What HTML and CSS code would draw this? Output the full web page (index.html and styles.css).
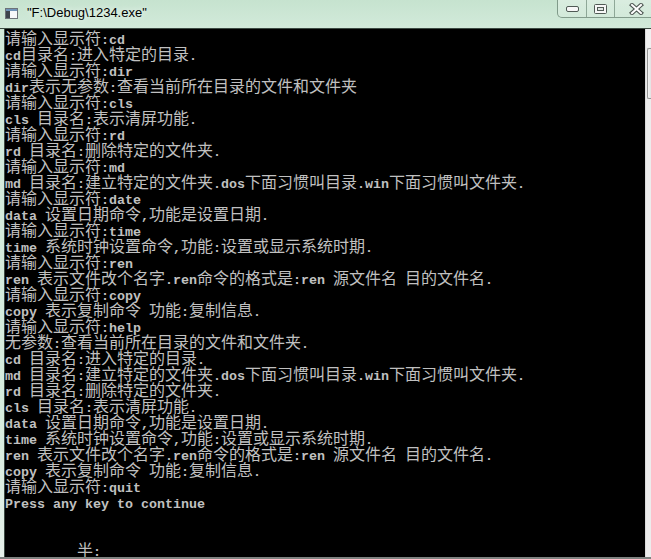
FILE: index.html
```html
<!DOCTYPE html>
<html>
<head>
<meta charset="utf-8">
<title>1234.exe</title>
<link rel="stylesheet" href="styles.css">
</head>
<body>
<div class="window">
  <div class="titlebar">
    <svg class="appicon" width="13" height="11" viewBox="0 0 13 11">
      <rect x="0.5" y="0.5" width="12" height="10" fill="#e8eef4" stroke="#6d7379"/>
      <rect x="1" y="1" width="11" height="2" fill="#6f93b8"/>
      <rect x="1" y="3" width="4" height="7" fill="#3d444c"/>
      <rect x="5" y="3" width="7" height="7" fill="#f6f8fa"/>
    </svg>
    <span class="title">"F:\Debug\1234.exe"</span>
    <div class="caption">
      <div class="cbtn">
        <svg width="13" height="6" viewBox="0 0 13 6"><rect x="0.5" y="0.5" width="12" height="5" rx="1.5" fill="#f7f7f7" stroke="#505a55"/></svg>
      </div>
      <div class="cbtn">
        <svg width="13" height="10" viewBox="0 0 13 10"><rect x="0.5" y="0.5" width="12" height="9" rx="1" fill="#f7f7f7" stroke="#505a55"/><rect x="3.5" y="3.5" width="6" height="3" fill="#dfe6e2" stroke="#505a55"/></svg>
      </div>
      <div class="cbtn close">
        <svg width="15" height="12" viewBox="0 0 15 12"><path d="M3 2 L12 10 M12 2 L3 10" stroke="#4d5752" stroke-width="4.2" stroke-linecap="square"/><path d="M3 2 L12 10 M12 2 L3 10" stroke="#ffffff" stroke-width="2" stroke-linecap="square"/></svg>
      </div>
    </div>
  </div>
  <div class="client">
    <div class="lframe"></div>
    <div class="console">
      <div class="l">请输入显示符<span class="a">:cd</span></div>
      <div class="l"><span class="a">cd</span>目录名<span class="a">:</span>进入特定的目录<span class="a">.</span></div>
      <div class="l">请输入显示符<span class="a">:dir</span></div>
      <div class="l"><span class="a">dir</span>表示无参数<span class="a">:</span>查看当前所在目录的文件和文件夹</div>
      <div class="l">请输入显示符<span class="a">:cls</span></div>
      <div class="l"><span class="a">cls </span>目录名<span class="a">:</span>表示清屏功能<span class="a">.</span></div>
      <div class="l">请输入显示符<span class="a">:rd</span></div>
      <div class="l"><span class="a">rd </span>目录名<span class="a">:</span>删除特定的文件夹<span class="a">.</span></div>
      <div class="l">请输入显示符<span class="a">:md</span></div>
      <div class="l"><span class="a">md </span>目录名<span class="a">:</span>建立特定的文件夹<span class="a">.dos</span>下面习惯叫目录<span class="a">.win</span>下面习惯叫文件夹<span class="a">.</span></div>
      <div class="l">请输入显示符<span class="a">:date</span></div>
      <div class="l"><span class="a">data </span>设置日期命令<span class="a">,</span>功能是设置日期<span class="a">.</span></div>
      <div class="l">请输入显示符<span class="a">:time</span></div>
      <div class="l"><span class="a">time </span>系统时钟设置命令<span class="a">,</span>功能<span class="a">:</span>设置或显示系统时期<span class="a">.</span></div>
      <div class="l">请输入显示符<span class="a">:ren</span></div>
      <div class="l"><span class="a">ren </span>表示文件改个名字<span class="a">.ren</span>命令的格式是<span class="a">:ren </span>源文件名<span class="a"> </span>目的文件名<span class="a">.</span></div>
      <div class="l">请输入显示符<span class="a">:copy</span></div>
      <div class="l"><span class="a">copy </span>表示复制命令<span class="a"> </span>功能<span class="a">:</span>复制信息<span class="a">.</span></div>
      <div class="l">请输入显示符<span class="a">:help</span></div>
      <div class="l">无参数<span class="a">:</span>查看当前所在目录的文件和文件夹<span class="a">.</span></div>
      <div class="l"><span class="a">cd </span>目录名<span class="a">:</span>进入特定的目录<span class="a">.</span></div>
      <div class="l"><span class="a">md </span>目录名<span class="a">:</span>建立特定的文件夹<span class="a">.dos</span>下面习惯叫目录<span class="a">.win</span>下面习惯叫文件夹<span class="a">.</span></div>
      <div class="l"><span class="a">rd </span>目录名<span class="a">:</span>删除特定的文件夹<span class="a">.</span></div>
      <div class="l"><span class="a">cls </span>目录名<span class="a">:</span>表示清屏功能<span class="a">.</span></div>
      <div class="l"><span class="a">data </span>设置日期命令<span class="a">,</span>功能是设置日期<span class="a">.</span></div>
      <div class="l"><span class="a">time </span>系统时钟设置命令<span class="a">,</span>功能<span class="a">:</span>设置或显示系统时期<span class="a">.</span></div>
      <div class="l"><span class="a">ren </span>表示文件改个名字<span class="a">.ren</span>命令的格式是<span class="a">:ren </span>源文件名<span class="a"> </span>目的文件名<span class="a">.</span></div>
      <div class="l"><span class="a">copy </span>表示复制命令<span class="a"> </span>功能<span class="a">:</span>复制信息<span class="a">.</span></div>
      <div class="l">请输入显示符<span class="a">:quit</span></div>
      <div class="l"><span class="a">Press any key to continue</span></div>
      <div class="l"></div>
      <div class="l"></div>
      <div class="l"><span class="a">         </span>半<span class="a">:</span></div>
    </div>
    <div class="scrollbar">
      <div class="sb-up"></div>
      <div class="thumb"><div class="grip"></div></div>
    </div>
  </div>
  <div class="bottom"></div>
</div>
</body>
</html>
```

FILE: styles.css
```css
* {
  box-sizing: border-box;
  margin: 0;
  padding: 0;
}

html, body {
  width: 651px;
  height: 559px;
  overflow: hidden;
}

body {
  background: #d3ebdb;
  font-family: "Liberation Sans", Arial, sans-serif;
}

.window {
  width: 651px;
  height: 559px;
  display: flex;
  flex-direction: column;
  overflow: hidden;
  background: linear-gradient(#c6e3cf 0px, #d2eada 28px, #d6ecde 420px, #e6f0ea 559px);
}

.titlebar {
  height: 28px;
  flex-shrink: 0;
  display: flex;
  align-items: flex-start;
}

.appicon {
  flex-shrink: 0;
  margin: 8px 0 0 5px;
}

.title {
  margin: 5px 0 0 9px;
  font-size: 13px;
  line-height: 16px;
  color: #000;
  text-shadow: 0 0 6px rgba(255, 255, 255, 0.9);
  white-space: nowrap;
}

.caption {
  margin-left: auto;
  margin-right: -8px;
  flex-shrink: 0;
  display: flex;
  height: 18px;
  border: 1px solid rgba(70, 100, 82, 0.6);
  border-top: none;
  border-radius: 0 0 0 5px;
  background: linear-gradient(rgba(255, 255, 255, 0.35), rgba(255, 255, 255, 0.12));
}

.cbtn {
  width: 28px;
  height: 17px;
  display: flex;
  align-items: center;
  justify-content: center;
  border-left: 1px solid rgba(70, 100, 82, 0.5);
}

.cbtn:first-child {
  border-left: none;
}

.cbtn.close {
  width: 44px;
}

.client {
  flex: 1;
  min-height: 0;
  display: flex;
  border-top: 1px solid #3d4b43;
}

.lframe {
  width: 5px;
  flex-shrink: 0;
  border-right: 1px solid #3d4b43;
}

.console {
  width: 640px;
  flex-shrink: 0;
  background: #000;
  color: #c0c0c0;
  overflow: hidden;
  font-family: "Noto Sans CJK SC", "Liberation Mono", monospace;
  font-size: 16px;
}

.l {
  height: 16px;
  line-height: 16px;
  white-space: pre;
}

.a {
  font-family: "Liberation Mono", "Courier New", monospace;
  font-size: 13.333px;
  font-weight: bold;
}

.scrollbar {
  width: 6px;
  flex-shrink: 0;
  background: #ececec;
  border-left: 1px solid #dadada;
  display: flex;
  flex-direction: column;
}

.sb-up {
  height: 18px;
  background: #f0f0f0;
}

.thumb {
  position: relative;
  margin: 1px 0 0 1px;
  height: 51px;
  border: 1px solid #959595;
  border-right: none;
  border-radius: 2px 0 0 2px;
  background: linear-gradient(90deg, #f4f4f4, #e2e2e2);
}

.grip {
  position: absolute;
  left: 3px;
  top: 21px;
  width: 2px;
  height: 7px;
  background: repeating-linear-gradient(#505050 0 1px, transparent 1px 2px);
}

.bottom {
  height: 2px;
  flex-shrink: 0;
  background: #7f8381;
}
```
